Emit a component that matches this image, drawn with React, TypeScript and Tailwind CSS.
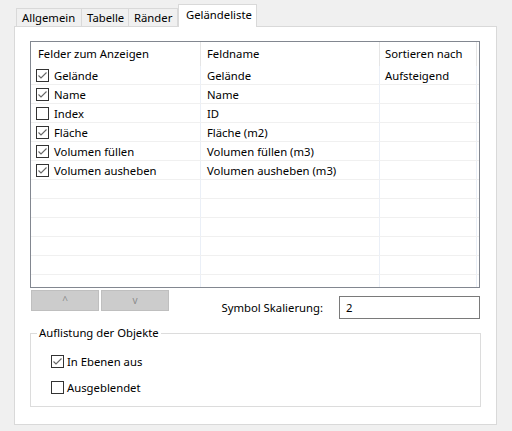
const rows: { on: boolean; name: string; field: string; sort: string }[] = [
  { on: true, name: "Gelände", field: "Gelände", sort: "Aufsteigend" },
  { on: true, name: "Name", field: "Name", sort: "" },
  { on: false, name: "Index", field: "ID", sort: "" },
  { on: true, name: "Fläche", field: "Fläche (m2)", sort: "" },
  { on: true, name: "Volumen füllen", field: "Volumen füllen (m3)", sort: "" },
  { on: true, name: "Volumen ausheben", field: "Volumen ausheben (m3)", sort: "" },
  { on: false, name: "", field: "", sort: "" },
  { on: false, name: "", field: "", sort: "" },
  { on: false, name: "", field: "", sort: "" },
  { on: false, name: "", field: "", sort: "" },
  { on: false, name: "", field: "", sort: "" },
  { on: false, name: "", field: "", sort: "" },
];

function Check({ on }: { on: boolean }) {
  return (
    <span className="w-[13px] h-[13px] border border-[#333333] bg-white flex items-center justify-center shrink-0">
      {on && (
        <svg width="11" height="11" viewBox="0 0 11 11">
          <polyline points="1.5,5.5 4,8 9.5,2.5" fill="none" stroke="#666666" strokeWidth="1.1" />
        </svg>
      )}
    </span>
  );
}

export default function App() {
  return (
    <div
      className="w-[512px] h-[431px] bg-[#f0f0f0] text-[11.3px] text-black overflow-hidden"
      style={{ fontFamily: '"Segoe UI", "Noto Sans", sans-serif' }}
    >
      {/* Tabs */}
      <div className="flex items-end h-[26px] pl-[16px]">
        <div className="h-[18px] pl-[5px] pt-[1px] border border-b-0 border-[#d9d9d9] flex items-center w-[66px]">Allgemein</div>
        <div className="h-[18px] pl-[5px] pt-[1px] border border-b-0 border-l-0 border-[#d9d9d9] flex items-center w-[47px]">Tabelle</div>
        <div className="h-[18px] pl-[5px] pt-[1px] border border-b-0 border-l-0 border-[#d9d9d9] flex items-center w-[49px]">Ränder</div>
        <div className="h-[23px] -mb-px relative z-10 pl-[7px] bg-white border border-b-0 border-[#d9d9d9] flex items-center w-[79px] pb-[2px]">
          Geländeliste
        </div>
      </div>

      {/* Panel */}
      <div className="ml-[14px] w-[483px] h-[399px] bg-white border border-[#d9d9d9] pl-[15px] pt-[14px]">
        {/* List view */}
        <div className="w-[450px] h-[247px] border border-[#828790] overflow-hidden">
          <div className="flex h-[24px] items-center">
            <div className="w-[170px] h-full border-r border-[#e5e5e5] pl-[7px] pt-[1px] flex items-center">Felder zum Anzeigen</div>
            <div className="w-[179px] h-full border-r border-[#e5e5e5] pl-[6px] pt-[1px] flex items-center">Feldname</div>
            <div className="w-[97px] h-full border-r border-[#e5e5e5] pl-[5px] pt-[1px] flex items-center">Sortieren nach</div>
          </div>
          {rows.map((r, i) => (
            <div key={i} className="flex h-[19px] border-b border-[#f0f0f0]">
              <div className="w-[170px] border-r border-[#eaeff7] pl-[5px] flex items-center gap-[5px]">
                {r.name && <Check on={r.on} />}
                <span className="pt-[2px]">{r.name}</span>
              </div>
              <div className="w-[179px] border-r border-[#eaeff7] pl-[6px] pt-[2px] flex items-center">{r.field}</div>
              <div className="w-[97px] border-r border-[#eaeff7] pl-[5px] pt-[2px] flex items-center">{r.sort}</div>
            </div>
          ))}
        </div>

        {/* Buttons + scaling */}
        <div className="flex w-[450px] h-[31px] pt-[2px]">
          <div className="flex gap-[2px] pl-[1px]">
            <div className="w-[68px] h-[21px] bg-[#cccccc] border border-[#bfbfbf] text-[#8c8c8c] text-[10px] flex items-center justify-center">^</div>
            <div className="w-[68px] h-[21px] bg-[#cccccc] border border-[#bfbfbf] text-[#8c8c8c] text-[10px] flex items-center justify-center">v</div>
          </div>
          <div className="flex-1 mt-[6px] h-[23px] pt-[2px] flex items-center justify-end">Symbol Skalierung:</div>
          <div className="ml-[16px] mt-[6px] w-[141px] h-[23px] border border-[#7a7a7a] pl-[6px] pt-[1px] flex items-center">2</div>
        </div>

        {/* Group box */}
        <fieldset className="mt-[6px] w-[451px] h-[82px] border border-[#dcdcdc]">
          <legend className="ml-[6px] px-[2px] leading-[16px]">Auflistung der Objekte</legend>
          <div className="pl-[20px] pt-[14px] flex flex-col gap-[13px]">
            <label className="flex items-center gap-[3px] h-[13px]">
              <Check on={true} />
              <span className="pt-[1px]">In Ebenen aus</span>
            </label>
            <label className="flex items-center gap-[3px] h-[13px]">
              <Check on={false} />
              <span className="pt-[1px]">Ausgeblendet</span>
            </label>
          </div>
        </fieldset>
      </div>
    </div>
  );
}
